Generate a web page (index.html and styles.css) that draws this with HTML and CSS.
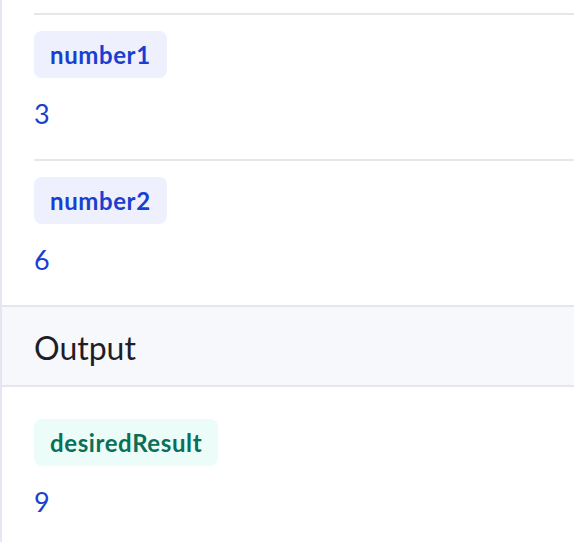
FILE: index.html
```html
<!DOCTYPE html>
<html>
<head>
<meta charset="utf-8">
<link rel="stylesheet" href="styles.css">
</head>
<body>
<div class="panel">
  <div class="inputs">
    <div class="field">
      <span class="badge badge-in">number1</span>
      <div class="value">3</div>
    </div>
    <div class="field">
      <span class="badge badge-in">number2</span>
      <div class="value">6</div>
    </div>
  </div>
  <div class="section-head">Output</div>
  <div class="outputs">
    <div class="field field-out">
      <span class="badge badge-out">desiredResult</span>
      <div class="value">9</div>
    </div>
  </div>
</div>
</body>
</html>
```
FILE: styles.css
```css
html, body {
  margin: 0;
  padding: 0;
  background: #ffffff;
}
body {
  font-family: Lato, "Noto Sans", sans-serif;
  width: 574px;
  height: 542px;
  overflow: hidden;
}
.panel {
  border-left: 2px solid #e6e6f2;
  min-height: 542px;
  box-sizing: border-box;
  padding-top: 13px;
}
.inputs {
  padding-left: 32px;
}
.field {
  border-top: 2px solid #e6e6eb;
  padding: 16px 0 26px;
  display: flex;
  flex-direction: column;
  align-items: flex-start;
}
.badge {
  display: inline-block;
  height: 47px;
  line-height: 47px;
  padding: 0 16px;
  border-radius: 8px;
  font-size: 24px;
  font-weight: 700;
  letter-spacing: 0.6px;
}
.badge-in {
  background: #eef0fd;
  color: #1a3fd0;
}
.badge-out {
  background: #ecfdf9;
  color: #0b6e57;
}
.value {
  margin-top: 16px;
  font-size: 27px;
  line-height: 39px;
  color: #1a3fd0;
}
.section-head {
  border-top: 2px solid #e6e6ee;
  border-bottom: 2px solid #e6e6ee;
  background: #f7f8fb;
  height: 78px;
  line-height: 81px;
  padding-left: 32px;
  font-size: 32px;
  color: #1e1f26;
  overflow: hidden;
}
.outputs {
  padding: 16px 0 0 32px;
}
.field-out {
  border-top: none;
}
```
